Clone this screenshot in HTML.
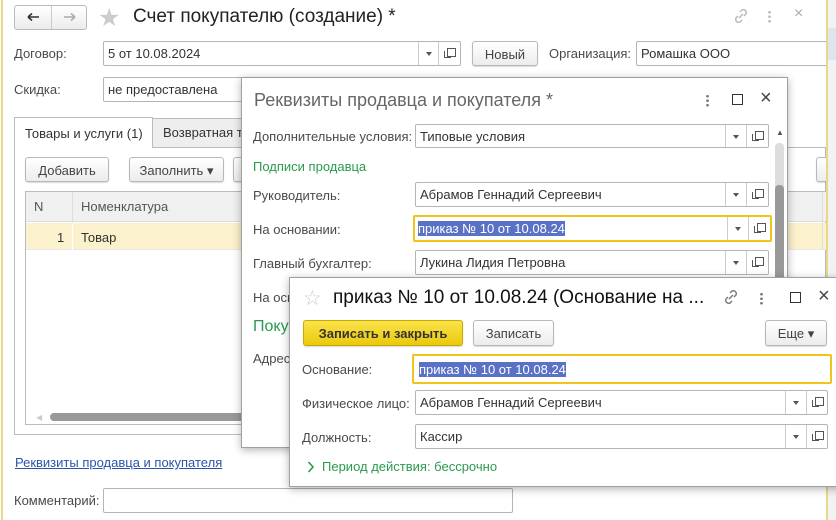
<!DOCTYPE html>
<html><head><meta charset="utf-8"><style>
*{box-sizing:border-box;margin:0;padding:0}
body{width:836px;height:520px;overflow:hidden;background:#fff;font-family:"Liberation Sans",Arial,sans-serif;font-size:13px;color:#333;position:relative}
.a{position:absolute;white-space:nowrap}
.lbl{position:absolute;color:#4a4a4a;font-size:13px;white-space:nowrap}
.inp{position:absolute;border:1px solid #b5b5b5;border-radius:2px;background:#fff;height:25px;padding:4px 0 0 4px;white-space:nowrap;overflow:hidden;color:#333}
.btn{position:absolute;border:1px solid #b8b8b8;border-radius:3px;background:linear-gradient(#fff,#ececec);box-shadow:0 1px 1px rgba(0,0,0,.15);text-align:center;height:25px;padding-top:5px;color:#444;white-space:nowrap}
.dd{position:absolute;top:0;bottom:0;border-left:1px solid #ccc;width:20px}
.dd:after{content:"";position:absolute;left:7px;top:10px;border:3px solid transparent;border-top:4px solid #555}
.cp{position:absolute;top:0;bottom:0;border-left:1px solid #ccc;width:22px}
.cp:before{content:"";position:absolute;left:8px;top:6px;width:7px;height:7px;border:1px solid #555;background:#fff}
.cp:after{content:"";position:absolute;left:5px;top:9px;width:6px;height:6px;border-left:1px solid #555;border-bottom:1px solid #555}
.sel{background:#5a72c6;color:#fff}
.green{color:#2a9a4e}
.dlg{position:absolute;background:#fff;border:1px solid #a0a0a0;box-shadow:0 2px 8px rgba(0,0,0,.3)}
.dots{position:absolute;width:3px;height:13px;background:radial-gradient(circle,#777 1.2px,transparent 1.5px) 0 0/3px 4.5px repeat-y}
</style></head><body>
<div class="a" style="left:1px;top:0;width:2px;height:520px;background:#e8d88a"></div>
<div class="a" style="left:828px;top:0;width:8px;height:520px;background:#f2f2f2"></div>
<div class="a" style="left:828px;top:28px;width:8px;height:32px;background:#dde6ef"></div>

<div class="a" style="left:14px;top:5px;width:73px;height:25px;border:1px solid #bbb;border-radius:3px;background:linear-gradient(#fff,#ececec)"></div>
<div class="a" style="left:51px;top:6px;width:1px;height:23px;background:#ccc"></div>
<svg class="a" style="left:27px;top:12px" width="13" height="10" viewBox="0 0 13 10"><path d="M1 5H12M1 5L5 1.5M1 5L5 8.5" stroke="#333" stroke-width="1.6" fill="none"/></svg>
<svg class="a" style="left:63px;top:12px" width="13" height="10" viewBox="0 0 13 10"><path d="M1 5H12M12 5L8 1.5M12 5L8 8.5" stroke="#aaa" stroke-width="1.6" fill="none"/></svg>
<div class="a" style="left:98px;top:3px;font-size:25px;color:#ccc">&#9733;</div>
<div class="a" style="left:133px;top:6px;font-size:19px;color:#222">Счет покупателю (создание) *</div>
<svg class="a" style="left:732px;top:7px" width="18" height="18" viewBox="0 0 18 18"><path d="M7 11 L11 7 M8 5 l2-2 a3 3 0 0 1 4 4 l-2 2 M10 13 l-2 2 a3 3 0 0 1 -4 -4 l2-2" stroke="#bbb" stroke-width="1.5" fill="none"/></svg>
<div class="dots" style="left:768px;top:10px;filter:opacity(.5)"></div>
<div class="a" style="left:794px;top:5px;font-size:16px;color:#aaa">&#215;</div>

<div class="lbl" style="left:14px;top:46px">Договор:</div>
<div class="inp" style="left:103px;top:41px;width:358px">5 от 10.08.2024<div class="dd" style="left:314px"></div><div class="cp" style="left:334px"></div></div>
<div class="btn" style="left:472px;top:41px;width:66px">Новый</div>
<div class="lbl" style="left:549px;top:46px">Организация:</div>
<div class="inp" style="left:636px;top:41px;width:192px">Ромашка ООО</div>
<div class="lbl" style="left:14px;top:82px">Скидка:</div>
<div class="inp" style="left:103px;top:77px;width:160px">не предоставлена</div>

<div class="a" style="left:14px;top:147px;width:812px;height:288px;border:1px solid #bbb"></div>
<div class="a" style="left:152px;top:118px;width:110px;height:30px;background:#eee;border:1px solid #bbb"></div>
<div class="a" style="left:163px;top:125px;color:#333">Возвратная тара</div>
<div class="a" style="left:14px;top:117px;width:139px;height:31px;background:#fff;border:1px solid #bbb;border-bottom:none;padding:8px 0 0 10px;color:#333">Товары и услуги (1)</div>
<div class="btn" style="left:25px;top:157px;width:84px">Добавить</div>
<div class="btn" style="left:129px;top:157px;width:95px">Заполнить &#9662;</div>
<div class="btn" style="left:233px;top:157px;width:30px"></div>
<div class="btn" style="left:816px;top:157px;width:12px"></div>

<div class="a" style="left:25px;top:191px;width:801px;height:234px;border:1px solid #bbb"></div>
<div class="a" style="left:26px;top:192px;width:800px;height:30px;background:#f0f0f0;border-bottom:1px solid #ddd"></div>
<div class="a" style="left:72px;top:192px;width:1px;height:58px;background:#ddd"></div>
<div class="a" style="left:34px;top:199px;color:#555">N</div>
<div class="a" style="left:81px;top:199px;color:#555">Номенклатура</div>
<div class="a" style="left:26px;top:223px;width:800px;height:27px;background:#fbf1cd;border-bottom:1px solid #e8e8e8"></div>
<div class="a" style="left:72px;top:223px;width:1px;height:27px;background:#fff"></div>
<div class="a" style="left:57px;top:230px">1</div>
<div class="a" style="left:81px;top:230px">Товар</div>
<div class="a" style="left:50px;top:413px;width:200px;height:8px;border-radius:4px;background:#999"></div>
<div class="a" style="left:36px;top:413px;color:#ccc;font-size:8px">&#9664;</div>
<div class="a" style="left:822px;top:192px;width:1px;height:58px;background:#ddd"></div>

<div class="a" style="left:15px;top:455px;color:#2b54a8;text-decoration:underline">Реквизиты продавца и покупателя</div>
<div class="lbl" style="left:14px;top:493px">Комментарий:</div>
<div class="inp" style="left:103px;top:488px;width:410px"></div>
<div class="a" style="left:826px;top:0;width:2px;height:520px;background:#e8d88a"></div>

<div class="dlg" style="left:241px;top:77px;width:547px;height:371px">
 <div class="a" style="left:12px;top:12px;font-size:18px;color:#666">Реквизиты продавца и покупателя *</div>
 <div class="dots" style="left:464px;top:16px"></div>
 <div class="a" style="left:490px;top:16px;width:11px;height:11px;border:1.5px solid #333"></div>
 <div class="a" style="left:518px;top:9px;font-size:20px;color:#444">&#215;</div>
 <div class="lbl" style="left:11px;top:51px">Дополнительные условия:</div>
 <div class="inp" style="left:173px;top:46px;width:354px;height:24px">Типовые условия<div class="dd" style="left:309px"></div><div class="cp" style="left:330px"></div></div>
 <div class="a green" style="left:11px;top:81px">Подписи продавца</div>
 <div class="lbl" style="left:11px;top:110px">Руководитель:</div>
 <div class="inp" style="left:173px;top:104px;width:354px;height:25px">Абрамов Геннадий Сергеевич<div class="dd" style="left:309px"></div><div class="cp" style="left:330px"></div></div>
 <div class="lbl" style="left:11px;top:144px">На основании:</div>
 <div class="inp" style="left:171px;top:137px;width:359px;height:27px;border:2px solid #f2c318;padding-left:3px"><span class="sel">приказ № 10 от 10.08.24</span><div class="dd" style="left:312px"></div><div class="cp" style="left:333px"></div></div>
 <div class="lbl" style="left:11px;top:178px">Главный бухгалтер:</div>
 <div class="inp" style="left:173px;top:172px;width:354px;height:25px">Лукина Лидия Петровна<div class="dd" style="left:309px"></div><div class="cp" style="left:330px"></div></div>
 <div class="lbl" style="left:11px;top:212px">На основании:</div>
 <div class="a green" style="left:11px;top:240px;font-size:16px">Покупатель</div>
 <div class="lbl" style="left:11px;top:273px">Адрес</div>
 <div class="a" style="left:534px;top:50px;color:#555;font-size:8px">&#9650;</div>
 <div class="a" style="left:533px;top:65px;width:9px;height:140px;border-radius:4px;background:#ddd"></div>
 <div class="a" style="left:533px;top:107px;width:9px;height:120px;border-radius:4px;background:#999"></div>
</div>

<div class="dlg" style="left:289px;top:277px;width:560px;height:210px">
 <div class="a" style="left:13px;top:8px;font-size:21px;color:#ccc">&#9734;</div>
 <div class="a" style="left:43px;top:9px;font-size:19px;color:#111">приказ № 10 от 10.08.24 (Основание на ...</div>
 <svg class="a" style="left:432px;top:10px" width="18" height="18" viewBox="0 0 18 18"><path d="M7 11 L11 7 M8 5 l2-2 a3 3 0 0 1 4 4 l-2 2 M10 13 l-2 2 a3 3 0 0 1 -4 -4 l2-2" stroke="#777" stroke-width="1.4" fill="none"/></svg>
 <div class="dots" style="left:470px;top:14px"></div>
 <div class="a" style="left:500px;top:14px;width:11px;height:11px;border:1.5px solid #333"></div>
 <div class="a" style="left:528px;top:7px;font-size:20px;color:#444">&#215;</div>
 <div class="btn" style="left:13px;top:42px;width:160px;height:26px;background:linear-gradient(#fbe34a,#eac90c);border-color:#c9a800;color:#333;font-weight:bold">Записать и закрыть</div>
 <div class="btn" style="left:183px;top:42px;width:81px;height:26px">Записать</div>
 <div class="btn" style="left:475px;top:42px;width:62px;height:26px">Еще &#9662;</div>
 <div class="lbl" style="left:12px;top:84px">Основание:</div>
 <div class="inp" style="left:122px;top:76px;width:420px;height:30px;border:2px solid #f2c318;padding:6px 0 0 5px"><span class="sel">приказ № 10 от 10.08.24</span></div>
 <div class="lbl" style="left:12px;top:118px">Физическое лицо:</div>
 <div class="inp" style="left:125px;top:112px;width:413px;height:25px">Абрамов Геннадий Сергеевич<div class="dd" style="left:369px"></div><div class="cp" style="left:390px"></div></div>
 <div class="lbl" style="left:12px;top:152px">Должность:</div>
 <div class="inp" style="left:125px;top:146px;width:413px;height:25px">Кассир<div class="dd" style="left:369px"></div><div class="cp" style="left:390px"></div></div>
 <svg class="a" style="left:17px;top:183px" width="8" height="12" viewBox="0 0 8 12"><path d="M1.5 1L6 6L1.5 11" stroke="#2a9a4e" stroke-width="1.6" fill="none"/></svg>
 <div class="a green" style="left:32px;top:181px">Период действия: бессрочно</div>
</div>
</body></html>
